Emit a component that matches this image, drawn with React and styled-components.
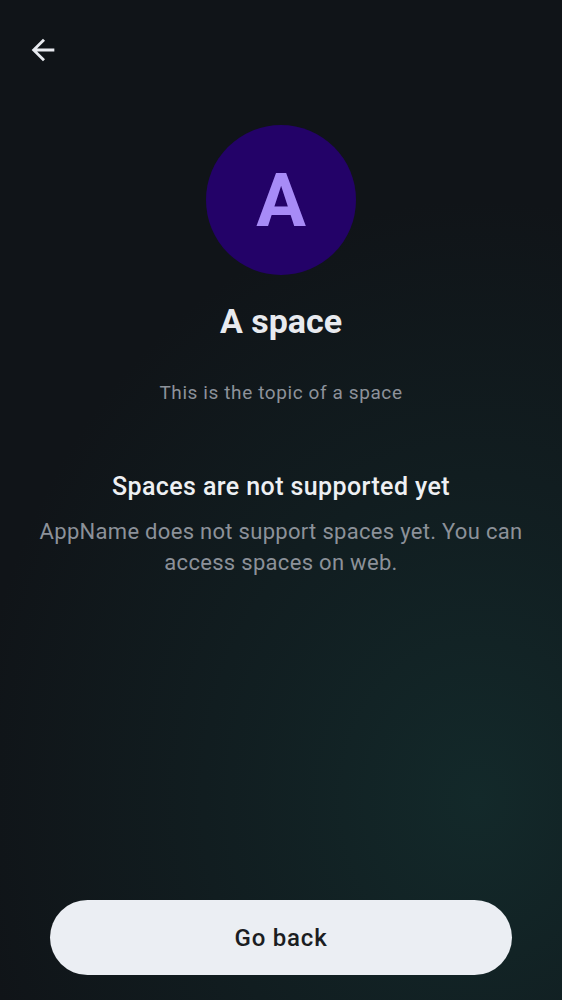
import React from 'react';
import styled, { createGlobalStyle } from 'styled-components';

const GlobalStyle = createGlobalStyle`
  html, body {
    margin: 0;
    padding: 0;
    background: #101418;
  }
  * { box-sizing: border-box; }
`

const Page = styled.div`
width: 100%;
min-height: 100vh;
display: flex;
flex-direction: column;
font-family: Roboto, "Noto Sans", sans-serif;
background:
  radial-gradient(ellipse 90% 60% at 85% 80%, #13292a 0%, rgba(18, 38, 40, 0.6) 45%, rgba(16, 20, 24, 0) 100%),
  #101418;
`

const TopBar = styled.div`
height: 100px;
display: flex;
align-items: center;
padding-left: 19px;
`

const IconButton = styled.button`
width: 48px;
height: 48px;
display: flex;
align-items: center;
justify-content: center;
border: none;
background-color: transparent;
color: #e8eaef;
padding: 0;
cursor: pointer;
`

const Content = styled.div`
display: flex;
flex-direction: column;
align-items: center;
padding: 25px 30px 0;
text-align: center;
`

const Avatar = styled.div`
width: 150px;
height: 150px;
border-radius: 50%;
background-color: #230268;
color: #a78bf7;
display: flex;
align-items: center;
justify-content: center;
font-size: 74px;
font-weight: 700;
`

const Title = styled.h1`
margin: 26px 0 0;
font-size: 34px;
line-height: 40px;
font-weight: 700;
color: #e8eaef;
`

const Topic = styled.p`
margin: 40px 0 0;
font-size: 19px;
line-height: 24px;
letter-spacing: 0.6px;
color: #8d929a;
`

const Heading = styled.h2`
margin: 66px 0 0;
font-size: 25px;
line-height: 32px;
font-weight: 500;
letter-spacing: 0.4px;
color: #eef0f3;
`

const Body = styled.p`
margin: 13px 0 0;
font-size: 22px;
line-height: 31px;
letter-spacing: 0.3px;
color: #8c9199;
`

const Spacer = styled.div`
flex: 1;
`

const Footer = styled.div`
display: flex;
justify-content: center;
padding: 0 50px 25px;
`

const PrimaryButton = styled.button`
width: 100%;
height: 75px;
border: none;
border-radius: 38px;
background-color: #ebeef3;
color: #1b1d22;
font-family: Roboto, "Noto Sans", sans-serif;
font-size: 24px;
font-weight: 500;
letter-spacing: 0.8px;
cursor: pointer;
`

const ArrowBack = () => (
  <svg width="34" height="34" viewBox="0 0 24 24" fill="currentColor">
    <path d="M20 11H7.83l5.59-5.59L12 4l-8 8 8 8 1.41-1.41L7.83 13H20v-2z" />
  </svg>
)

const App = () => {
  return (
    <>
      <GlobalStyle />
      <Page>
        <TopBar>
          <IconButton aria-label="Back"><ArrowBack /></IconButton>
        </TopBar>
        <Content>
          <Avatar>A</Avatar>
          <Title>A space</Title>
          <Topic>This is the topic of a space</Topic>
          <Heading>Spaces are not supported yet</Heading>
          <Body>AppName does not support spaces yet. You can access spaces on web.</Body>
        </Content>
        <Spacer />
        <Footer>
          <PrimaryButton>Go back</PrimaryButton>
        </Footer>
      </Page>
    </>
  )
}

export default App;
